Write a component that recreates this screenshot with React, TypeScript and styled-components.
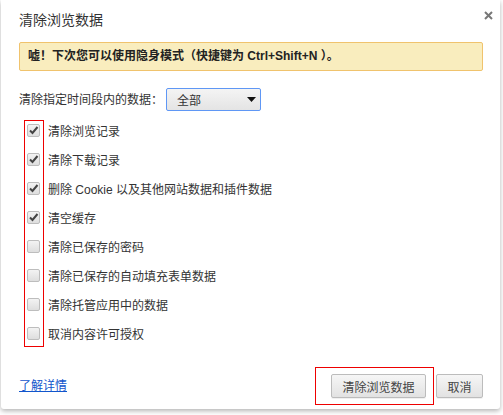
import React from "react";
import styled, { createGlobalStyle } from "styled-components";

const Global = createGlobalStyle`
  html, body { margin: 0; padding: 0; background: #fff; }
  body {
    font-family: "Liberation Sans", "Noto Sans CJK SC", sans-serif;
    font-size: 12px;
    color: #333;
  }
`;

const Page = styled.div`
  width: 503px;
  height: 415px;
  padding-left: 1px;
  box-sizing: border-box;
  background: #fff;
`;

const Dialog = styled.div`
  width: 499px;
  height: 409px;
  box-sizing: border-box;
  padding: 0 17px 0 18px;
  background: #fff;
  border-radius: 0 0 3px 3px;
  box-shadow: 0 2px 5px rgba(0, 0, 0, 0.3);
  display: flex;
  flex-direction: column;
`;

const Header = styled.div`
  display: flex;
  justify-content: space-between;
  align-items: flex-start;
  padding-top: 10px;
`;

const Title = styled.div`
  font-size: 14px;
  line-height: 20px;
  color: #333;
`;

const Close = styled.button`
  border: 0;
  padding: 0;
  margin: 1px -10px 0 0;
  background: transparent;
  width: 9px;
  height: 9px;
  display: flex;
`;

const Banner = styled.div`
  margin-top: 12px;
  height: 29px;
  box-sizing: border-box;
  border: 1px solid #f0c36d;
  border-radius: 2px;
  background: #f9edbe;
  padding: 0 8px;
  line-height: 27px;
  font-weight: bold;
  color: #222;
`;

const SelectRow = styled.div`
  margin-top: 17px;
  display: flex;
  align-items: center;
  gap: 3px;
`;

const Label = styled.span`
  line-height: 20px;
  color: #333;
`;

const Select = styled.div`
  width: 95px;
  height: 23px;
  box-sizing: border-box;
  border: 1px solid #5f97f5;
  border-radius: 2px;
  background: linear-gradient(#f4f4f4, #e4e4e4);
  display: flex;
  align-items: center;
  justify-content: space-between;
  padding: 0 4px 0 10px;
  color: #333;
`;

const List = styled.div`
  margin-top: 5px;
  position: relative;
  display: flex;
  flex-direction: column;
`;

const Row = styled.label`
  height: 29px;
  display: flex;
  align-items: center;
  gap: 8px;
  padding-left: 8px;
  color: #333;
`;

const Box = styled.span`
  width: 13px;
  height: 13px;
  box-sizing: border-box;
  border: 1px solid #bdbdbd;
  border-radius: 2px;
  background: linear-gradient(#f3f3f3, #dedede);
  display: flex;
  align-items: center;
  justify-content: center;
`;

const Mark = styled.div`
  position: absolute;
  left: 5px;
  top: 4px;
  width: 20px;
  height: 227px;
  box-sizing: border-box;
  border: 1px solid #e00;
  pointer-events: none;
`;

const Footer = styled.div`
  margin-top: auto;
  padding-bottom: 4px;
  display: flex;
  align-items: center;
  justify-content: space-between;
`;

const Link = styled.a`
  color: #1155cc;
  text-decoration: underline;
  line-height: 20px;
`;

const Actions = styled.div`
  display: flex;
  align-items: center;
  gap: 2px;
`;

const Highlight = styled.div`
  border: 1px solid #e00;
  padding: 6px 7px 6px 15px;
  display: flex;
`;

const Button = styled.button<{ $w: number }>`
  width: ${(p) => p.$w}px;
  height: 24px;
  box-sizing: border-box;
  border: 1px solid #bcbcbc;
  border-radius: 2px;
  background: linear-gradient(#f6f6f6, #e2e2e2);
  box-shadow: 0 1px 0 rgba(0, 0, 0, 0.06);
  font-family: inherit;
  font-size: 12px;
  color: #444;
  padding: 0;
`;

const items: [string, boolean][] = [
  ["清除浏览记录", true],
  ["清除下载记录", true],
  ["删除 Cookie 以及其他网站数据和插件数据", true],
  ["清空缓存", true],
  ["清除已保存的密码", false],
  ["清除已保存的自动填充表单数据", false],
  ["清除托管应用中的数据", false],
  ["取消内容许可授权", false],
];

export default function App() {
  return (
    <Page>
      <Global />
      <Dialog>
        <Header>
          <Title>清除浏览数据</Title>
          <Close aria-label="关闭">
            <svg width="9" height="9" viewBox="0 0 9 9">
              <path d="M1 1 L8 8 M8 1 L1 8" stroke="#777" strokeWidth="2" />
            </svg>
          </Close>
        </Header>
        <Banner>嘘！下次您可以使用隐身模式（快捷键为 Ctrl+Shift+N ）。</Banner>
        <SelectRow>
          <Label>清除指定时间段内的数据：</Label>
          <Select>
            <span>全部</span>
            <svg width="9" height="5" viewBox="0 0 9 5">
              <path d="M0 0 H9 L4.5 5 Z" fill="#111" />
            </svg>
          </Select>
        </SelectRow>
        <List>
          {items.map(([t, c]) => (
            <Row key={t}>
              <Box>
                {c && (
                  <svg width="11" height="11" viewBox="0 0 11 11">
                    <path d="M2 5.5 L4.5 8 L9.5 2" stroke="#444" strokeWidth="2" fill="none" />
                  </svg>
                )}
              </Box>
              <span>{t}</span>
            </Row>
          ))}
          <Mark />
        </List>
        <Footer>
          <Link href="#">了解详情</Link>
          <Actions>
            <Highlight>
              <Button $w={95}>清除浏览数据</Button>
            </Highlight>
            <Button $w={47}>取消</Button>
          </Actions>
        </Footer>
      </Dialog>
    </Page>
  );
}
